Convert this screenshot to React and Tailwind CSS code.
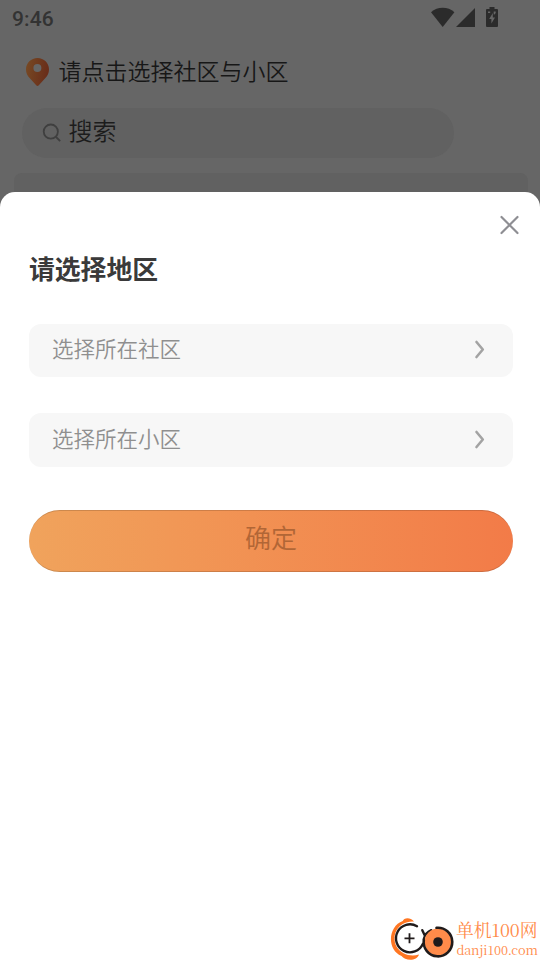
const StatusBar = () => (
  <div className="flex h-[40px] items-start justify-between pl-[12px] pr-[42px]">
    <span className="mt-[7px] font-['Roboto',sans-serif] text-[21px] font-medium leading-[24px] tracking-[0.15px] text-[#333]">9:46</span>
    <div className="mt-[7px] flex items-start text-[#2b2b2b]">
      <svg width="24" height="20" viewBox="0 0 24 20" fill="currentColor">
        <path d="M0 5.2C6.5-.6 17-.6 23.4 5.2L11.7 20Z" />
      </svg>
      <svg className="ml-px" width="19" height="20" viewBox="0 0 19 20" fill="currentColor">
        <path d="M19 1V20H0Z" />
      </svg>
      <svg className="ml-[11px]" width="12" height="20" viewBox="0 0 12 20">
        <path fill="currentColor" d="M3.5 0h5v2H11a1 1 0 0 1 1 1v16a1 1 0 0 1-1 1H1a1 1 0 0 1-1-1V3a1 1 0 0 1 1-1h2.5Z" />
        <path fill="#666" d="M6.8 6v4.6H9L5.4 16.5V12H3.2ZM2 4.5h2.2V6H2ZM7.7 4.5h2V6L8.5 7.5h-.8Z" />
      </svg>
    </div>
  </div>
);

const Location = () => (
  <div className="flex h-[68px] items-start pl-[26px]">
    <svg className="mt-[18px]" width="23" height="29" viewBox="0 0 23 29">
      <defs>
        <linearGradient id="pin" x1="0" x2="1" y1="0" y2="0.2">
          <stop offset="0" stopColor="#774a24" />
          <stop offset="1" stopColor="#692d19" />
        </linearGradient>
      </defs>
      <path fill="url(#pin)" d="M11.5 0C5.1 0 0 5 0 11.4c0 3.5 1.4 6.2 3.6 8.5l6.6 7.4c.8 1 1.8 1 2.6 0l6.6-7.4c2.2-2.3 3.6-5 3.6-8.5C23 5 17.9 0 11.5 0Z" />
      <circle cx="11.4" cy="10.1" r="4" fill="#666" />
    </svg>
    <span className="ml-[9.5px] mt-[13px] text-[23px] font-[350] leading-[34px] text-[#171717]">请点击选择社区与小区</span>
  </div>
);

const SearchBar = () => (
  <div className="ml-[22px] flex h-[50px] w-[432px] items-start rounded-full bg-[#616161] pl-[20px]">
    <svg className="mt-[15px]" width="20" height="20" viewBox="0 0 20 20" fill="none" stroke="#3f3f3f" strokeWidth="1.8">
      <circle cx="8.8" cy="8.6" r="7.1" />
      <path d="M14 14l4.2 4.2" />
    </svg>
    <span className="ml-[6.5px] mt-[4px] text-[24px] font-[350] leading-[36px] text-[#1c1c1c]">搜索</span>
  </div>
);

const SelectRow = ({ label, className }) => (
  <button className={`flex w-full items-start justify-between rounded-[12px] bg-[#f7f7f7] pl-[23px] pr-[28px] ${className}`}>
    <span className="mt-[8px] text-[21.5px] font-[350] leading-[32px] text-[#8f8f8f]">{label}</span>
    <svg className="mt-[16px]" width="11" height="20" viewBox="0 0 11 20" fill="none" stroke="#a3a3a3" strokeWidth="2.6" strokeLinecap="round" strokeLinejoin="round">
      <path d="M2.5 2l6.3 7.5L2.5 17" />
    </svg>
  </button>
);

const Watermark = () => (
  <div className="absolute bottom-0 right-0 flex h-[44px] w-[150px] text-[#ff8b4a]">
    <svg className="shrink-0" width="66" height="44" viewBox="0 0 66 44" fill="none">
      <path fill="#ff7622" d="M24 5.6C20 .5 13.5 2 12.8 5C-1.5 10-4 33 11.5 40C15 45 27 45.5 29 38.5C24 40 18 39.6 13.5 37.2C1 30.5 2.2 14 12.8 8C16 6.2 20 5.2 24 5.6Z" />
      <path stroke="#201b1b" strokeWidth="2.4" strokeLinecap="round" d="M27 10.2A14 14 0 1 0 32.8 28" />
      <path stroke="#201b1b" strokeWidth="2.4" strokeLinecap="round" d="M32.3 14.2L34.8 19.5M41.3 14.2Q35.3 16.8 33.8 23" />
      <circle cx="48" cy="26" r="13.5" fill="#ff8b4a" />
      <path stroke="#201b1b" strokeWidth="2.6" strokeLinecap="round" d="M46.5 11.8A14.3 14.3 0 1 1 33.8 24" />
      <circle cx="48" cy="26" r="4.8" fill="#201b1b" />
      <path stroke="#201b1b" strokeWidth="1.8" d="M14.5 22.3h10M19.5 17.3v10" />
    </svg>
    <div className="flex flex-col whitespace-nowrap font-['Noto_Serif_CJK_SC','Liberation_Serif','Noto_Sans_CJK_SC',serif]">
      <span className="mt-[2px] text-[17.8px] leading-[24px]">单机100网</span>
      <span className="pl-[0.5px] text-[12.8px] leading-[16px] tracking-[-0.2px]">danji100.com</span>
    </div>
  </div>
);

const RegionSheet = () => (
  <section className="absolute inset-x-0 bottom-0 top-[192px] flex flex-col rounded-t-[15px] bg-white pl-[29px] pr-[27px]">
    <button aria-label="关闭" className="mr-[-7px] mt-[23px] self-end">
      <svg className="block" width="21" height="20" viewBox="0 0 21 20" fill="none" stroke="#8e8e93" strokeWidth="2.2" strokeLinecap="round">
        <path d="M2.5 2l16 16M18.5 2l-16 16" />
      </svg>
    </button>
    <h2 className="mt-[14px] text-[25.8px] font-bold leading-[38px] text-[#3a3a3a]">请选择地区</h2>
    <SelectRow label="选择所在社区" className="mt-[37px] h-[53px]" />
    <SelectRow label="选择所在小区" className="mt-[36px] h-[54px] pt-px" />
    <button className="mt-[43px] flex h-[62px] w-full shrink-0 items-start justify-center rounded-full border-y border-black/15 bg-linear-to-r from-[#f0a35c] to-[#f27b48] bg-origin-border pt-[7px] text-[26px] font-[350] leading-[38px] text-[#b16636]">
      确定
    </button>
  </section>
);

export default function App() {
  return (
    <main className="relative h-[960px] w-full overflow-hidden bg-[#666] font-['Noto_Sans_CJK_SC',sans-serif]">
      <StatusBar />
      <Location />
      <SearchBar />
      <div className="mx-[14px] mr-[12px] mt-[15px] h-[60px] rounded-[8px] bg-[#616161]" />
      <RegionSheet />
      <Watermark />
    </main>
  );
}
